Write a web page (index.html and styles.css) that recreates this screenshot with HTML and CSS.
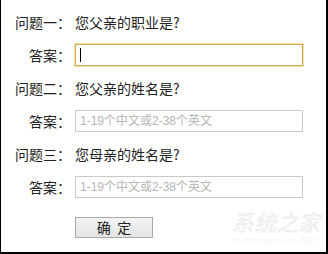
FILE: index.html
```html
<!DOCTYPE html>
<html lang="zh-CN">
<head>
<meta charset="utf-8">
<title>密保问题</title>
<link rel="stylesheet" href="styles.css">
</head>
<body>
<div class="frame">
  <form class="qa">
    <span class="label">问题一：</span>
    <span class="question">您父亲的职业是?</span>
    <span class="label">答案：</span>
    <span class="field"><input class="answer focused" type="text"><span class="caret"></span></span>

    <span class="label">问题二：</span>
    <span class="question">您父亲的姓名是?</span>
    <span class="label">答案：</span>
    <span class="field"><input class="answer" type="text" placeholder="1-19个中文或2-38个英文"></span>

    <span class="label">问题三：</span>
    <span class="question">您母亲的姓名是?</span>
    <span class="label">答案：</span>
    <span class="field"><input class="answer" type="text" placeholder="1-19个中文或2-38个英文"></span>

    <span class="label"></span>
    <span class="actions"><button class="submit" type="button">确&nbsp;&nbsp;定</button></span>
  </form>
  <div class="watermark">
    <span class="wm-title">系统之家</span>
    <span class="wm-url">XITONGZHIJIA.NET</span>
  </div>
</div>
</body>
</html>
```

FILE: styles.css
```css
html, body {
  margin: 0;
  padding: 0;
  background: #fff;
}

.frame {
  position: relative;
  width: 328px;
  height: 254px;
  box-sizing: border-box;
  border-left: 1px solid #000;
  border-right: 2px solid #000;
  border-bottom: 2px solid #000;
  background: #fff;
  padding: 11px 0 0 14px;
  font-family: "Noto Sans CJK SC", "Liberation Sans", sans-serif;
  font-size: 14px;
  color: #222;
  overflow: hidden;
}

.qa {
  position: relative;
  z-index: 1;
  display: grid;
  grid-template-columns: 56px 228px;
  column-gap: 4px;
  row-gap: 11px;
  align-items: center;
  margin: 0;
}

.label {
  text-align: right;
  line-height: 22px;
  height: 22px;
  white-space: nowrap;
}

.question {
  line-height: 22px;
  height: 22px;
  white-space: nowrap;
}

.field {
  position: relative;
  display: block;
  height: 22px;
}

.answer {
  display: block;
  width: 228px;
  height: 22px;
  box-sizing: border-box;
  margin: 0;
  padding: 0 4px;
  border: 1px solid #c9c9c9;
  background: #fff;
  font-family: "Liberation Sans", "Noto Sans CJK SC", sans-serif;
  font-size: 12px;
  color: #333;
  outline: none;
}

.answer::placeholder {
  color: #b4b4b4;
  opacity: 1;
}

.answer.focused {
  border-color: #d4ad52;
  box-shadow: 0 0 0 1px #f1dfa8;
}

.caret {
  position: absolute;
  left: 5px;
  top: 4px;
  width: 1px;
  height: 14px;
  background: #000;
}

.actions {
  display: block;
  padding-top: 8px;
}

.submit {
  display: block;
  width: 78px;
  height: 21px;
  margin: 0;
  padding: 0;
  border: 1px solid #a9a9a9;
  background: linear-gradient(#f4f4f4, #e4e4e4);
  font-family: "Noto Sans CJK SC", sans-serif;
  font-size: 14px;
  line-height: 19px;
  color: #222;
  text-align: center;
}

.watermark {
  position: absolute;
  right: 6px;
  bottom: 7px;
  display: flex;
  flex-direction: column;
  align-items: flex-end;
  color: #f0f0f0;
  z-index: 0;
}

.wm-title {
  display: block;
  font-family: "Noto Sans CJK SC", sans-serif;
  font-size: 22px;
  font-weight: bold;
  font-style: italic;
  line-height: 32px;
  height: 32px;
}

.wm-url {
  display: block;
  font-family: "Liberation Sans", sans-serif;
  font-size: 7px;
  line-height: 8px;
  height: 8px;
  letter-spacing: 1.5px;
}
```
